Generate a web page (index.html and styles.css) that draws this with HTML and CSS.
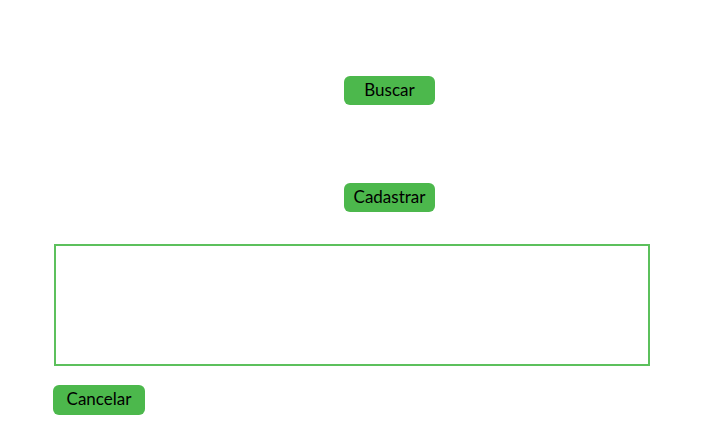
FILE: index.html
```html
<!DOCTYPE html>
<html lang="pt">
<head>
<meta charset="utf-8">
<link rel="stylesheet" href="styles.css">
</head>
<body>
<main class="page">
  <div class="row row-center"><button class="btn btn-wide">Buscar</button></div>
  <div class="row row-center row-second"><button class="btn btn-wide">Cadastrar</button></div>
  <div class="panel"></div>
  <div class="row row-left"><button class="btn btn-cancel">Cancelar</button></div>
</main>
</body>
</html>
```
FILE: styles.css
```css
html, body {
  margin: 0;
  padding: 0;
  background: #ffffff;
}
.page {
  display: flex;
  flex-direction: column;
  padding: 76px 0 0 54px;
  width: 598px;
  font-family: Lato, "Open Sans", sans-serif;
}
.row {
  display: flex;
}
.row-center {
  padding-left: 290px;
}
.row-second {
  margin-top: 78px;
}
.btn {
  background: #4cb84c;
  border: none;
  border-radius: 6px;
  color: #000;
  font-family: Lato, "Open Sans", sans-serif;
  font-size: 17px;
  height: 29px;
  padding: 0 0 3px 0;
  display: flex;
  align-items: center;
  justify-content: center;
}
.btn-wide {
  width: 91px;
}
.panel {
  margin-top: 32px;
  height: 118px;
  border: 2px solid #5cc05c;
  box-sizing: content-box;
  width: 592px;
}
.row-left {
  margin-top: 19px;
  margin-left: -1px;
}
.btn-cancel {
  width: 92px;
  height: 30px;
}
```
